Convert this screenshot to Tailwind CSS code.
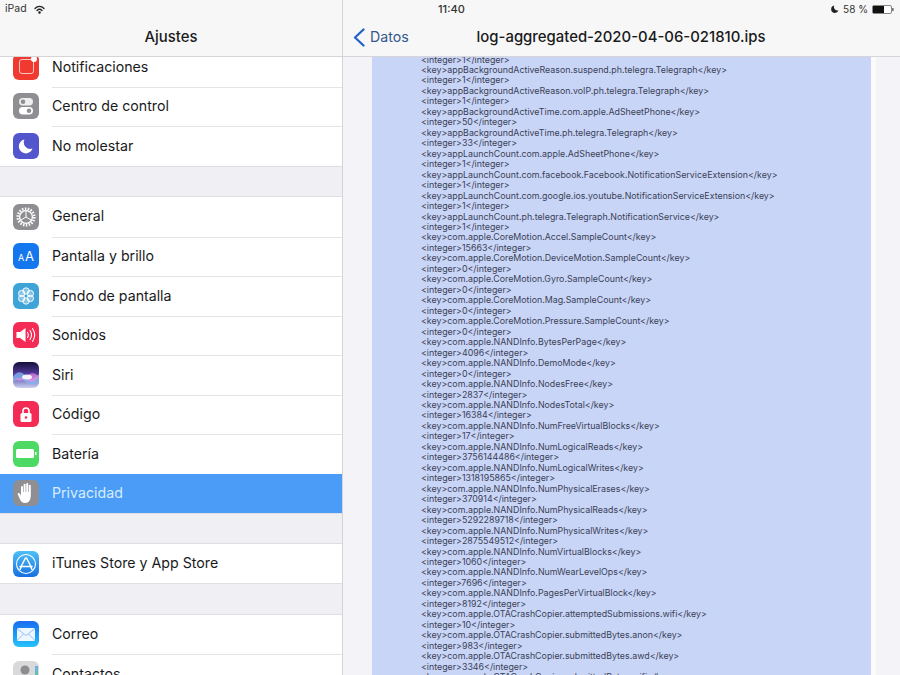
<!doctype html>
<html lang="es"><head><meta charset="utf-8"><script src="https://cdn.jsdelivr.net/npm/@tailwindcss/browser@4"></script></head>
<body class="m-0 bg-white">
<div class="w-[900px] h-[675px] overflow-hidden flex font-['Inter','Liberation_Sans',sans-serif] text-[#1a1a1c]">
  <!-- left -->
  <aside class="w-[343px] h-full shrink-0 flex flex-col border-r border-[#d4d4d8] bg-[#efeff4]">
    <header class="relative z-10 h-[57px] shrink-0 bg-[#f7f7f7] border-b border-[#d6d6da] px-[5px]">
      <div class="h-[18px] flex items-center gap-[7px] text-[10.5px] text-[#333]">
        <span>iPad</span>
        <svg class="w-[11px] h-[9px]" viewBox="0 0 22 18" fill="none" stroke="#222" stroke-width="2.6" stroke-linecap="round"><path d="M2 7c5-5.500 13-5.500 18 0"/><path d="M6 11c3-3 7-3 10 0"/><circle cx="11" cy="15" r="1.300" fill="#222"/></svg>
      </div>
      <div class="text-center text-[14.9px] font-medium mt-[9px] leading-[20px]">Ajustes</div>
    </header>
    <div class="flex-1 overflow-hidden">
      <div class="-mt-[10px] text-[14.2px]">
        <section class="bg-white border-b border-[#dfdfe3]">
          <div class="h-[39.5px] flex items-center pl-[13px] gap-[13px]">
            <span class="w-[26px] h-[26px] rounded-[6px] bg-[#f03a30] flex items-center justify-center relative"><span class="block w-[15px] h-[15px] border-[1.5px] border-white/70 rounded-[3px]"></span><span class="absolute right-[2px] top-[2px] w-[6px] h-[6px] rounded-full bg-white"></span></span>
            <span class="flex-1 h-full flex items-center pb-[1px]">Notificaciones</span>
          </div>
          <div class="h-[39.5px] flex items-center pl-[13px] gap-[13px]">
            <span class="w-[26px] h-[26px] rounded-[6px] bg-[#8e8e93] flex items-center justify-center"><svg class="w-[18px] h-[18px]" viewBox="0 0 18 18"><rect x="2" y="1" width="14" height="7.500" rx="3.700" fill="#fff" fill-opacity=".85"/><circle cx="6" cy="4.700" r="2.300" fill="#8e8e93"/><rect x="2" y="10" width="14" height="7.500" rx="3.700" fill="#fff"/><circle cx="12" cy="13.700" r="2.300" fill="#8e8e93"/></svg></span>
            <span class="flex-1 h-full flex items-center border-t border-[#e4e4e7] pb-[2px]">Centro de control</span>
          </div>
          <div class="h-[39.5px] flex items-center pl-[13px] gap-[13px]">
            <span class="w-[26px] h-[26px] rounded-[6px] bg-[#5355cc] flex items-center justify-center"><svg class="w-[16px] h-[16px]" viewBox="0 0 16 16"><path d="M6.500 1.500A7 7 0 1 0 14.500 10.500 6.500 6.500 0 0 1 6.500 1.500z" fill="#fff"/></svg></span>
            <span class="flex-1 h-full flex items-center border-t border-[#e4e4e7] pb-[2px]">No molestar</span>
          </div>
        </section>
        <div class="h-[29.5px]"></div>
        <section class="bg-white border-t border-[#dfdfe3]">
          <div class="h-[39.5px] flex items-center pl-[13px] gap-[13px]">
            <span class="w-[26px] h-[26px] rounded-[6px] bg-[#8e8e93] flex items-center justify-center"><svg class="w-[22px] h-[22px]" viewBox="0 0 22 22" fill="none" stroke="#fff"><circle cx="11" cy="11" r="8.300" stroke-width="2.600" stroke-dasharray="1.500 1.400"/><circle cx="11" cy="11" r="6.400" stroke-width="1.300"/><path d="M11 11V5M11 11l5 3M11 11l-5 3" stroke-width="1"/></svg></span>
            <span class="flex-1 h-full flex items-center pb-[2px]">General</span>
          </div>
          <div class="h-[39.5px] flex items-center pl-[13px] gap-[13px]">
            <span class="w-[26px] h-[26px] rounded-[6px] bg-[#1577ee] flex items-center justify-center text-white leading-none gap-[1px]"><span class="text-[9px] mt-[2px]">A</span><span class="text-[13px]">A</span></span>
            <span class="flex-1 h-full flex items-center border-t border-[#e4e4e7] pb-[2px]">Pantalla y brillo</span>
          </div>
          <div class="h-[39.5px] flex items-center pl-[13px] gap-[13px]">
            <span class="w-[26px] h-[26px] rounded-[6px] bg-[#3ea4d8] flex items-center justify-center"><svg class="w-[20px] h-[20px]" viewBox="0 0 20 20" fill="#fff" fill-opacity=".35" stroke="#fff" stroke-width=".9"><circle cx="10" cy="5" r="3.200"/><circle cx="10" cy="15" r="3.200"/><circle cx="5.700" cy="7.500" r="3.200"/><circle cx="14.300" cy="7.500" r="3.200"/><circle cx="5.700" cy="12.500" r="3.200"/><circle cx="14.300" cy="12.500" r="3.200"/></svg></span>
            <span class="flex-1 h-full flex items-center border-t border-[#e4e4e7] pb-[2px]">Fondo de pantalla</span>
          </div>
          <div class="h-[39.5px] flex items-center pl-[13px] gap-[13px]">
            <span class="w-[26px] h-[26px] rounded-[6px] bg-[#f42b55] flex items-center justify-center"><svg class="w-[20px] h-[16px]" viewBox="0 0 20 16" fill="none" stroke="#fff" stroke-width="1.100" stroke-linecap="round"><path d="M1 5.500h3.500L9 2v12l-4.500-3.500H1z" fill="#fff"/><path d="M11.500 5.500c1 1.500 1 3.500 0 5M14 3.500c1.800 2.700 1.800 6.300 0 9M16.500 1.500c2.700 4 2.700 9 0 13"/></svg></span>
            <span class="flex-1 h-full flex items-center border-t border-[#e4e4e7] pb-[2px]">Sonidos</span>
          </div>
          <div class="h-[39.5px] flex items-center pl-[13px] gap-[13px]">
            <span class="w-[26px] h-[26px] rounded-[6px] bg-gradient-to-b from-[#15103a] via-[#5b3fa8] to-[#c9d3ee] flex items-center justify-center overflow-hidden"><svg class="w-[26px] h-[26px]" viewBox="0 0 26 26"><path d="M0 15c4-6 8-6 13-1s9 3 13-2v8c-4 3-9 3-13 0s-9-3-13 0z" fill="#7fb8f0" fill-opacity=".75"/><path d="M0 15c4 5 9 5 13 0s9-5 13 0c-3 5-8 6-13 3s-10-2-13 0z" fill="#e88ae0" fill-opacity=".7"/><ellipse cx="14" cy="15" rx="5" ry="2.500" fill="#fff" fill-opacity=".9"/></svg></span>
            <span class="flex-1 h-full flex items-center border-t border-[#e4e4e7] pb-[2px]">Siri</span>
          </div>
          <div class="h-[39.5px] flex items-center pl-[13px] gap-[13px]">
            <span class="w-[26px] h-[26px] rounded-[6px] bg-[#f42b55] flex items-center justify-center"><svg class="w-[14px] h-[17px]" viewBox="0 0 14 17"><path d="M4 8V5a3 3 0 0 1 6 0v3" fill="none" stroke="#fff" stroke-width="1.600"/><rect x="1.500" y="7" width="11" height="9" rx="1.500" fill="#fff"/><circle cx="7" cy="11.500" r="1.300" fill="#f42b55"/></svg></span>
            <span class="flex-1 h-full flex items-center border-t border-[#e4e4e7] pb-[2px]">Código</span>
          </div>
          <div class="h-[39.5px] flex items-center pl-[13px] gap-[13px]">
            <span class="w-[26px] h-[26px] rounded-[6px] bg-[#4cd964] flex items-center justify-center"><svg class="w-[21px] h-[11px]" viewBox="0 0 21 11"><rect x="0" y="1" width="18" height="9" rx="1.500" fill="#fff"/><rect x="19" y="4" width="1.500" height="3" fill="#fff"/></svg></span>
            <span class="flex-1 h-full flex items-center border-t border-[#e4e4e7] pb-[2px]">Batería</span>
          </div>
          <div class="h-[39.5px] flex items-center pl-[13px] gap-[13px] bg-[#4a9cf6] text-[#d8edff]">
            <span class="w-[26px] h-[26px] rounded-[6px] bg-[#8e8e93] flex items-center justify-center"><svg class="w-[18px] h-[22px]" viewBox="0 0 18 22" fill="#fff"><path d="M4 5a1 1 0 0 1 2 0v5h.6V2.800a1 1 0 0 1 2 0V10h.6V2a1 1 0 0 1 2 0v8h.6V3.800a1 1 0 0 1 2 0V13c0 5-2 8-5.500 8-3 0-4.300-1.500-5.500-4L.8 12.500c-.5-1.200 1.100-2 1.800-.9L4 13.500z"/></svg></span>
            <span class="flex-1 h-full flex items-center pb-[2px]">Privacidad</span>
          </div>
        </section>
        <div class="h-[30px] border-t border-[#dfdfe3]"></div>
        <section class="bg-white border-y border-[#dfdfe3]">
          <div class="h-[39px] flex items-center pl-[13px] gap-[13px]">
            <span class="w-[26px] h-[26px] rounded-[6px] bg-gradient-to-b from-[#4fc0f8] to-[#1a6fe0] flex items-center justify-center"><svg class="w-[22px] h-[22px]" viewBox="0 0 22 22" fill="none" stroke="#fff"><circle cx="11" cy="11" r="9.500" stroke-width="1.100"/><path d="M11.500 5l5 9.500M10.500 5l-5 9.500M5 13.500h12M5 16.500l1-2M17 16.500l-1-2" stroke-width="1.500" stroke-linecap="round"/></svg></span>
            <span class="flex-1 pb-[1px]">iTunes Store y App Store</span>
          </div>
        </section>
        <div class="h-[29.5px]"></div>
        <section class="bg-white border-t border-[#dfdfe3]">
          <div class="h-[39.5px] flex items-center pl-[13px] gap-[13px]">
            <span class="w-[26px] h-[26px] rounded-[6px] bg-gradient-to-b from-[#1d6cf0] to-[#28c2fa] flex items-center justify-center"><svg class="w-[18px] h-[13px]" viewBox="0 0 18 13"><rect width="18" height="13" rx="1.500" fill="#eef6ff"/><path d="M.5 1 9 7.500 17.500 1M.5 12 6.500 6M17.500 12l-6-6" fill="none" stroke="#7fb4ee" stroke-width=".8"/></svg></span>
            <span class="flex-1 h-full flex items-center pb-[2px]">Correo</span>
          </div>
          <div class="h-[39.5px] flex items-center pl-[13px] gap-[13px]">
            <span class="w-[26px] h-[26px] rounded-[6px] bg-[#d9d9dc] flex items-center justify-center relative overflow-hidden"><svg class="w-[18px] h-[20px]" viewBox="0 0 18 20" fill="#8d8d90"><circle cx="8" cy="6" r="4.500"/><path d="M1 19c0-6 3-8 7-8s7 2 7 8z"/></svg><span class="absolute right-[1px] top-[5px] w-[3px] h-[17px] bg-gradient-to-b from-[#6ab0e8] to-[#5fd06e]"></span></span>
            <span class="flex-1 h-full flex items-center border-t border-[#e4e4e7] pb-[2px]">Contactos</span>
          </div>
        </section>
      </div>
    </div>
  </aside>
  <!-- right -->
  <main class="flex-1 h-full flex flex-col bg-[#f4f4f8]">
    <header class="relative z-10 h-[57px] shrink-0 bg-[#f7f7f7] border-b border-[#d6d6da]">
      <div class="h-[18px] flex items-center text-[10px] text-[#333] relative">
        <span class="absolute left-[95px] font-medium text-[11px]">11:40</span>
        <div class="ml-auto mr-[6px] flex items-center gap-[4px]">
          <svg class="w-[8px] h-[8px]" viewBox="0 0 16 16"><path d="M6.500 1A7.500 7.500 0 1 0 15 10.500 7 7 0 0 1 6.500 1z" fill="#222"/></svg>
          <span>58 %</span>
          <svg class="w-[22px] h-[9px]" viewBox="0 0 22 9"><rect x=".5" y=".5" width="19" height="8" rx="1.500" fill="#fff" stroke="#555" stroke-width=".7"/><rect x="1" y="1" width="11" height="7" fill="#111"/><rect x="20.300" y="3" width="1.200" height="3" fill="#444"/></svg>
        </div>
      </div>
      <div class="relative h-[38px]">
        <div class="absolute left-[10px] top-[9px] flex items-center gap-[5px] text-[#33588f] text-[14.2px] leading-[20px]">
          <svg class="w-[12px] h-[19px]" viewBox="0 0 12 19" fill="none" stroke="#2563c8" stroke-width="2.300" stroke-linecap="round" stroke-linejoin="round"><path d="M10.500 1.500 2 9.500l8.500 8"/></svg>
          <span>Datos</span>
        </div>
        <div class="text-center text-[14.9px] font-medium pt-[9px] ml-[-1px] leading-[20px]">log-aggregated-2020-04-06-021810.ips</div>
      </div>
    </header>
    <div class="flex-1 overflow-hidden pl-[29px] pr-[24px] flex">
      <div class="w-[499px] bg-[#c9d5f6] pl-[49px] -mt-[2.5px] text-[8.85px] leading-[10.47px] text-[#3a4258] whitespace-pre overflow-hidden shadow-[5px_0_0_#fbfbfd]">&lt;integer&gt;1&lt;/integer&gt;
&lt;key&gt;appBackgroundActiveReason.suspend.ph.telegra.Telegraph&lt;/key&gt;
&lt;integer&gt;1&lt;/integer&gt;
&lt;key&gt;appBackgroundActiveReason.voIP.ph.telegra.Telegraph&lt;/key&gt;
&lt;integer&gt;1&lt;/integer&gt;
&lt;key&gt;appBackgroundActiveTime.com.apple.AdSheetPhone&lt;/key&gt;
&lt;integer&gt;50&lt;/integer&gt;
&lt;key&gt;appBackgroundActiveTime.ph.telegra.Telegraph&lt;/key&gt;
&lt;integer&gt;33&lt;/integer&gt;
&lt;key&gt;appLaunchCount.com.apple.AdSheetPhone&lt;/key&gt;
&lt;integer&gt;1&lt;/integer&gt;
&lt;key&gt;appLaunchCount.com.facebook.Facebook.NotificationServiceExtension&lt;/key&gt;
&lt;integer&gt;1&lt;/integer&gt;
&lt;key&gt;appLaunchCount.com.google.ios.youtube.NotificationServiceExtension&lt;/key&gt;
&lt;integer&gt;1&lt;/integer&gt;
&lt;key&gt;appLaunchCount.ph.telegra.Telegraph.NotificationService&lt;/key&gt;
&lt;integer&gt;1&lt;/integer&gt;
&lt;key&gt;com.apple.CoreMotion.Accel.SampleCount&lt;/key&gt;
&lt;integer&gt;15663&lt;/integer&gt;
&lt;key&gt;com.apple.CoreMotion.DeviceMotion.SampleCount&lt;/key&gt;
&lt;integer&gt;0&lt;/integer&gt;
&lt;key&gt;com.apple.CoreMotion.Gyro.SampleCount&lt;/key&gt;
&lt;integer&gt;0&lt;/integer&gt;
&lt;key&gt;com.apple.CoreMotion.Mag.SampleCount&lt;/key&gt;
&lt;integer&gt;0&lt;/integer&gt;
&lt;key&gt;com.apple.CoreMotion.Pressure.SampleCount&lt;/key&gt;
&lt;integer&gt;0&lt;/integer&gt;
&lt;key&gt;com.apple.NANDInfo.BytesPerPage&lt;/key&gt;
&lt;integer&gt;4096&lt;/integer&gt;
&lt;key&gt;com.apple.NANDInfo.DemoMode&lt;/key&gt;
&lt;integer&gt;0&lt;/integer&gt;
&lt;key&gt;com.apple.NANDInfo.NodesFree&lt;/key&gt;
&lt;integer&gt;2837&lt;/integer&gt;
&lt;key&gt;com.apple.NANDInfo.NodesTotal&lt;/key&gt;
&lt;integer&gt;16384&lt;/integer&gt;
&lt;key&gt;com.apple.NANDInfo.NumFreeVirtualBlocks&lt;/key&gt;
&lt;integer&gt;17&lt;/integer&gt;
&lt;key&gt;com.apple.NANDInfo.NumLogicalReads&lt;/key&gt;
&lt;integer&gt;3756144486&lt;/integer&gt;
&lt;key&gt;com.apple.NANDInfo.NumLogicalWrites&lt;/key&gt;
&lt;integer&gt;1318195865&lt;/integer&gt;
&lt;key&gt;com.apple.NANDInfo.NumPhysicalErases&lt;/key&gt;
&lt;integer&gt;370914&lt;/integer&gt;
&lt;key&gt;com.apple.NANDInfo.NumPhysicalReads&lt;/key&gt;
&lt;integer&gt;5292289718&lt;/integer&gt;
&lt;key&gt;com.apple.NANDInfo.NumPhysicalWrites&lt;/key&gt;
&lt;integer&gt;2875549512&lt;/integer&gt;
&lt;key&gt;com.apple.NANDInfo.NumVirtualBlocks&lt;/key&gt;
&lt;integer&gt;1060&lt;/integer&gt;
&lt;key&gt;com.apple.NANDInfo.NumWearLevelOps&lt;/key&gt;
&lt;integer&gt;7696&lt;/integer&gt;
&lt;key&gt;com.apple.NANDInfo.PagesPerVirtualBlock&lt;/key&gt;
&lt;integer&gt;8192&lt;/integer&gt;
&lt;key&gt;com.apple.OTACrashCopier.attemptedSubmissions.wifi&lt;/key&gt;
&lt;integer&gt;10&lt;/integer&gt;
&lt;key&gt;com.apple.OTACrashCopier.submittedBytes.anon&lt;/key&gt;
&lt;integer&gt;983&lt;/integer&gt;
&lt;key&gt;com.apple.OTACrashCopier.submittedBytes.awd&lt;/key&gt;
&lt;integer&gt;3346&lt;/integer&gt;
&lt;key&gt;com.apple.OTACrashCopier.submittedBytes.wifi&lt;/key&gt;</div>
    </div>
  </main>
</div>
</body></html>
